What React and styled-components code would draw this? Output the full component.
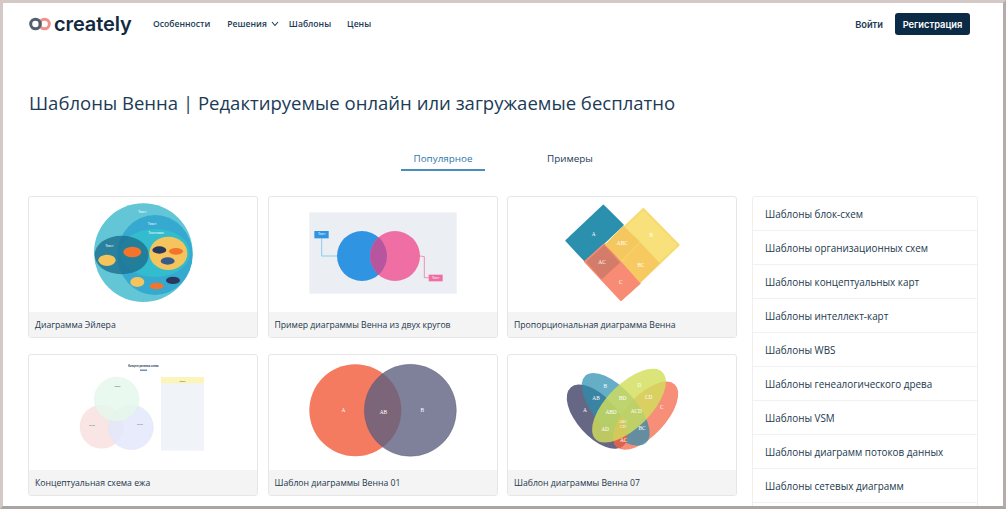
import React from 'react';
import styled, {createGlobalStyle} from 'styled-components';

const GlobalStyle = createGlobalStyle`
  html, body {
    margin: 0;
    padding: 0;
    background: #fff;
  }
  * {
    box-sizing: border-box;
  }
`;

const Page = styled.div`
  width: 1006px;
  height: 509px;
  overflow: hidden;
  border-style: solid;
  border-width: 3px;
  border-color: #d4c9c7 #b5aca9 #aba5a1 #d4c9c7;
  background: #fff;
  font-family: 'Open Sans', 'Liberation Sans', sans-serif;
  color: #1c3b57;
`;

const Header = styled.header`
  display: flex;
  align-items: center;
  height: 42px;
  padding: 0 33px 0 26px;
`;

const Logo = styled.div`
  display: flex;
  align-items: center;
  gap: 3px;
  width: 124px;
`;

const LogoText = styled.span`
  font-family: 'Inter', 'Liberation Sans', sans-serif;
  font-size: 20px;
  font-weight: 600;
  line-height: 20px;
  color: #12293f;
  letter-spacing: -0.1px;
`;

const Nav = styled.nav`
  display: flex;
  align-items: center;
  flex: 1;
`;

const NavLink = styled.a`
  display: flex;
  align-items: center;
  margin-left: ${(p) => p.$left}px;
  font-size: 8.6px;
  font-weight: 600;
  color: #1c3b57;
`;

const Chevron = styled.svg`
  width: 8px;
  height: 6px;
  margin-left: 4px;
`;

const LoginLink = styled.a`
  margin-right: 12px;
  font-family: 'Inter', 'Liberation Sans', sans-serif;
  font-size: 9.3px;
  font-weight: 600;
  color: #1c3b57;
`;

const SignUp = styled.button`
  width: 75px;
  height: 22px;
  padding: 0;
  border: 0;
  border-radius: 3px;
  background: #0b2a45;
  color: #fff;
  font-family: 'Inter', 'Liberation Sans', sans-serif;
  font-size: 9.3px;
  font-weight: 600;
`;

const Title = styled.h1`
  margin: 45px 0 0 26px;
  font-size: 18.55px;
  font-weight: 400;
  line-height: 25px;
  color: #1c3b57;
`;

const Tabs = styled.div`
  display: flex;
  gap: 43px;
  margin-top: 32px;
  padding-left: 398px;
`;

const Tab = styled.div`
  width: 84px;
  height: 24px;
  line-height: 23px;
  text-align: center;
  font-size: 9.85px;
  color: ${(p) => (p.$active ? '#2d77ab' : '#1c3b57')};
  border-bottom: 2px solid ${(p) => (p.$active ? '#4a8dbb' : 'transparent')};
`;

const Main = styled.main`
  display: flex;
  align-items: flex-start;
  gap: 15px;
  margin-top: 25px;
  padding-left: 25px;
`;

const Grid = styled.div`
  display: grid;
  grid-template-columns: repeat(3, 230px);
  column-gap: 9.5px;
  row-gap: 16px;
`;

const Card = styled.article`
  height: 142px;
  border: 1px solid #e6e6e6;
  border-radius: 3px;
  overflow: hidden;
  background: #fff;
`;

const Thumb = styled.svg`
  display: block;
  width: 228px;
  height: 115px;
`;

const Caption = styled.div`
  height: 25px;
  padding-left: 6px;
  background: #f4f4f4;
  font-size: 8.66px;
  line-height: 27px;
  color: #23384d;
  white-space: nowrap;
`;

const Side = styled.ul`
  width: 226px;
  height: 340px;
  margin: 0;
  padding: 0;
  list-style: none;
  border: 1px solid #efefef;
  border-radius: 3px;
`;

const SideItem = styled.li`
  height: 34px;
  padding-left: 12px;
  border-bottom: 1px solid #f1f1f1;
  font-size: 9.9px;
  line-height: 35px;
  color: #23384d;
  white-space: nowrap;
`;

const Label = ({x, y, size = 16, fill = '#fff', font = 'Liberation Serif', weight = 400, children}) => (
  <text
    x={x}
    y={y}
    fontSize={size}
    fill={fill}
    fontFamily={font}
    fontWeight={weight}
    textAnchor='middle'
    dominantBaseline='middle'
  >
    {children}
  </text>
);

const EulerThumb = () => (
  <Thumb viewBox='27 21 684 345'>
    <circle cx='370' cy='188' r='148' fill='#62c6d6' />
    <ellipse cx='405' cy='195' rx='113' ry='120' fill='#36a9d0' />
    <ellipse cx='405' cy='189' rx='105' ry='72' fill='#33bccd' />
    <ellipse cx='305' cy='195' rx='81' ry='58' fill='#1d6f8f' opacity='0.8' />
    <ellipse cx='445' cy='190' rx='57' ry='50' fill='#f6c45c' />
    <ellipse cx='337' cy='186' rx='27' ry='16' fill='#f4742b' />
    <ellipse cx='261' cy='211' rx='26' ry='17' fill='#f6c45c' />
    <ellipse cx='418' cy='180' rx='21' ry='11' fill='#27395d' />
    <ellipse cx='468' cy='184' rx='21' ry='10' fill='#f4742b' />
    <ellipse cx='443' cy='213' rx='21' ry='11' fill='#3a5a8a' />
    <ellipse cx='352' cy='276' rx='21' ry='15' fill='#f6c45c' />
    <ellipse cx='410' cy='288' rx='21' ry='10' fill='#f4742b' />
    <ellipse cx='459' cy='271' rx='21' ry='11' fill='#27395d' />
    <Label x='367' y='65' size='10' font='Liberation Sans'>Текст</Label>
    <Label x='396' y='101' size='10' font='Liberation Sans'>Текст</Label>
    <Label x='408' y='130' size='10' font='Liberation Sans'>Текстовое</Label>
    <Label x='268' y='168' size='10' font='Liberation Sans'>Текст</Label>
  </Thumb>
);

const TwoCirclesThumb = () => (
  <Thumb viewBox='12 21 684 345'>
    <defs>
      <clipPath id='two-left'>
        <circle cx='291' cy='198' r='75' />
      </clipPath>
    </defs>
    <rect x='133' y='67' width='442' height='244' fill='#ebeef2' />
    <polyline points='216,198 170,198 170,145' fill='none' stroke='#7fc3ee' strokeWidth='2.5' />
    <polyline points='465,198 478,200 478,263 491,263' fill='none' stroke='#ee7fad' strokeWidth='2.5' />
    <rect x='148' y='123' width='43' height='22' fill='#2f94e2' />
    <rect x='491' y='254' width='42' height='20' fill='#ef6fa5' />
    <Label x='170' y='134' size='9' font='Liberation Sans'>Текст</Label>
    <Label x='512' y='264' size='9' font='Liberation Sans'>Текст</Label>
    <circle cx='291' cy='198' r='75' fill='#2f94e2' />
    <circle cx='390' cy='198' r='75' fill='#ef6fa5' />
    <circle cx='390' cy='198' r='75' fill='#b8559f' clipPath='url(#two-left)' />
  </Thumb>
);

const ProportionalThumb = () => (
  <Thumb viewBox='9 21 684 345'>
    <g strokeLinejoin='round' strokeWidth='6'>
      <polygon points='295,47 353,105 240,212 184,152' fill='#2b8fae' stroke='#2b8fae' />
      <polygon points='415,57 521,165 405,276 302,165' fill='#f8e07a' stroke='#f7da70' />
      <polygon points='240,215 298,163 404,280 348,330' fill='#f88b74' stroke='#f88b74' />
      <polygon points='243,215 298,165 345,218 290,268' fill='#d47c6a' />
      <polygon points='300,165 355,107 405,155 350,212' fill='#f4c85f' />
      <polygon points='350,215 405,157 465,220 405,278' fill='#f6ca60' />
    </g>
    <Label x='266' y='133'>A</Label>
    <Label x='439' y='137'>B</Label>
    <Label x='352' y='162'>ABC</Label>
    <Label x='291' y='218'>AC</Label>
    <Label x='408' y='226'>BC</Label>
    <Label x='347' y='277'>C</Label>
  </Thumb>
);

const HedgehogThumb = () => (
  <Thumb viewBox='27 15 684 345'>
    <Label x='370' y='48' size='8' fill='#23384d' font='Liberation Sans' weight={700}>Концептуальная схема</Label>
    <rect x='360' y='59' width='21' height='3' fill='#2d5a88' />
    <rect x='423' y='81' width='129' height='221' fill='#f0f3f8' />
    <rect x='423' y='81' width='129' height='19' fill='#fcf5bb' />
    <circle cx='245' cy='230' r='65' fill='#f9e6e4' stroke='#f2d8d6' />
    <circle cx='333' cy='232' r='67' fill='#e3e8fb' stroke='#d8dff5' opacity='0.85' />
    <circle cx='290' cy='148' r='67' fill='#e6f8ec' stroke='#d5efdd' opacity='0.8' />
    <Label x='292' y='108' size='7' fill='#333' font='Liberation Sans'>Текст</Label>
    <Label x='216' y='227' size='7' fill='#555' font='Liberation Sans'>Текст</Label>
    <Label x='360' y='223' size='7' fill='#555' font='Liberation Sans'>Текст</Label>
    <Label x='487' y='93' size='7' fill='#333' font='Liberation Sans'>Текст</Label>
  </Thumb>
);

const TwoSetThumb = () => (
  <Thumb viewBox='12 15 684 345'>
    <circle cx='271' cy='181' r='138' fill='#f47a60' />
    <circle cx='436' cy='181' r='138' fill='#5f6080' fillOpacity='0.8' stroke='#55566f' />
    <Label x='235' y='181'>A</Label>
    <Label x='355' y='188'>AB</Label>
    <Label x='472' y='181'>B</Label>
  </Thumb>
);

const FourSetThumb = () => (
  <Thumb viewBox='9 15 684 345'>
    <defs>
      <clipPath id='four-c'>
        <ellipse cx='422' cy='197' rx='128' ry='60' transform='rotate(-47 422 197)' />
      </clipPath>
    </defs>
    <ellipse cx='276' cy='200' rx='118' ry='60' transform='rotate(48 276 200)' fill='#666785' />
    <ellipse cx='422' cy='197' rx='128' ry='60' transform='rotate(-47 422 197)' fill='#f47a60' fillOpacity='0.85' />
    <ellipse cx='332' cy='178' rx='136' ry='62' transform='rotate(48 332 178)' fill='#2b8fae' fillOpacity='0.72' />
    <g clipPath='url(#four-c)'>
      <ellipse cx='276' cy='200' rx='118' ry='60' transform='rotate(48 276 200)' fill='#dd6350' />
    </g>
    <ellipse cx='372' cy='167' rx='142' ry='66' transform='rotate(-45 372 167)' fill='#d2de5c' fillOpacity='0.82' />
    <Label x='240' y='183'>A</Label>
    <Label x='301' y='110'>B</Label>
    <Label x='470' y='174'>C</Label>
    <Label x='403' y='108'>D</Label>
    <Label x='273' y='145'>AB</Label>
    <Label x='353' y='145'>BD</Label>
    <Label x='431' y='142'>CD</Label>
    <Label x='318' y='188'>ABD</Label>
    <Label x='394' y='184'>ACD</Label>
    <Label x='354' y='215' size='12'>ABC</Label>
    <Label x='354' y='232' size='12'>CD</Label>
    <Label x='300' y='238'>AD</Label>
    <Label x='411' y='236'>BC</Label>
    <Label x='356' y='273'>AC</Label>
  </Thumb>
);

const templates = [
  {title: 'Диаграмма Эйлера', Art: EulerThumb},
  {title: 'Пример диаграммы Венна из двух кругов', Art: TwoCirclesThumb},
  {title: 'Пропорциональная диаграмма Венна', Art: ProportionalThumb},
  {title: 'Концептуальная схема ежа', Art: HedgehogThumb},
  {title: 'Шаблон диаграммы Венна 01', Art: TwoSetThumb},
  {title: 'Шаблон диаграммы Венна 07', Art: FourSetThumb},
];

const sideLinks = [
  'Шаблоны блок-схем',
  'Шаблоны организационных схем',
  'Шаблоны концептуальных карт',
  'Шаблоны интеллект-карт',
  'Шаблоны WBS',
  'Шаблоны генеалогического древа',
  'Шаблоны VSM',
  'Шаблоны диаграмм потоков данных',
  'Шаблоны сетевых диаграмм',
];

const LogoMark = () => (
  <svg width='22' height='14' viewBox='0 0 22 14'>
    <circle cx='15.5' cy='7' r='4.8' fill='none' stroke='#f0918a' strokeWidth='3' />
    <circle cx='6.5' cy='7' r='4.8' fill='none' stroke='#51606f' strokeWidth='3' />
  </svg>
);

export default function App() {
  return (
    <>
      <GlobalStyle />
      <Page>
        <Header>
          <Logo>
            <LogoMark />
            <LogoText>creately</LogoText>
          </Logo>
          <Nav>
            <NavLink>Особенности</NavLink>
            <NavLink $left={17}>
              Решения
              <Chevron viewBox='0 0 8 6'>
                <polyline points='1,1 4,4.5 7,1' fill='none' stroke='#1c3b57' strokeWidth='1.1' />
              </Chevron>
            </NavLink>
            <NavLink $left={10}>Шаблоны</NavLink>
            <NavLink $left={16}>Цены</NavLink>
          </Nav>
          <LoginLink>Войти</LoginLink>
          <SignUp>Регистрация</SignUp>
        </Header>
        <Title>Шаблоны Венна | Редактируемые онлайн или загружаемые бесплатно</Title>
        <Tabs>
          <Tab $active>Популярное</Tab>
          <Tab>Примеры</Tab>
        </Tabs>
        <Main>
          <Grid>
            {templates.map(({title, Art}) => (
              <Card key={title}>
                <Art />
                <Caption>{title}</Caption>
              </Card>
            ))}
          </Grid>
          <Side>
            {sideLinks.map((link) => (
              <SideItem key={link}>{link}</SideItem>
            ))}
          </Side>
        </Main>
      </Page>
    </>
  );
}
